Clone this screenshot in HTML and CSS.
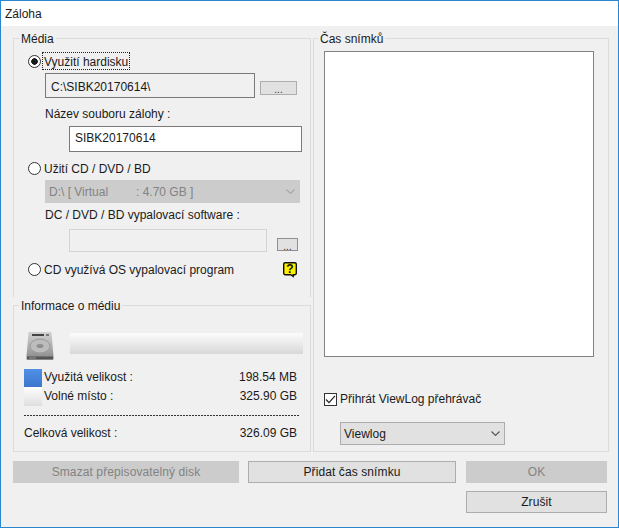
FILE: index.html
```html
<!DOCTYPE html>
<html lang="cs">
<head>
    <meta charset="UTF-8">
    <meta name="viewport" content="width=device-width, initial-scale=1.0">
    <title>Záloha</title>
    <link rel="stylesheet" href="styles.css">
</head>
<body>
<div class="window">
    <div class="title">Záloha</div>

    <div class="main">
        <div class="left-col">
            <fieldset class="group media">
                <legend>Média</legend>

                <label class="option first">
                    <input type="radio" name="target" checked>
                    <span class="focused">Využití hardisku</span>
                </label>
                <div class="path-row">
                    <div class="path-box">C:\SIBK20170614\</div>
                    <button class="dots path-dots" type="button">...</button>
                </div>
                <div class="caption name-caption">Název souboru zálohy :</div>
                <input class="text-input name-input" type="text" value="SIBK20170614">

                <label class="option second">
                    <input type="radio" name="target">
                    <span>Užití CD / DVD / BD</span>
                </label>
                <div class="combo combo-off drive-combo">
                    <span class="drive-text"><span class="drive-name">D:\ [ Virtual</span>: 4.70 GB ]</span>
                    <svg class="chevron" width="9" height="5" viewBox="0 0 9 5"><path d="M.5 .5l4 4 4-4" fill="none" stroke="#a6a6a6" stroke-width="1.100"/></svg>
                </div>
                <div class="caption burn-caption">DC / DVD / BD vypalovací software :</div>
                <div class="burn-row">
                    <input class="text-input burn-input" type="text" disabled>
                    <button class="dots burn-dots" type="button">...</button>
                </div>

                <div class="os-row">
                    <label class="option">
                        <input type="radio" name="target">
                        <span>CD využívá OS vypalovací program</span>
                    </label>
                    <!-- help bubble -->
                    <svg class="help" width="14" height="16" viewBox="0 0 14 16">
                        <path d="M2.200 .7h9.600a1.500 1.500 0 0 1 1.500 1.500v9a1.500 1.500 0 0 1-1.500 1.500h-1.600v1.800l-2.500-1.800H2.200a1.500 1.500 0 0 1-1.500-1.500v-9A1.500 1.500 0 0 1 2.200 .7z" fill="#fff000" stroke="#111" stroke-width="1.400"/>
                        <text x="7" y="11.400" text-anchor="middle" class="help-mark">?</text>
                    </svg>
                </div>
            </fieldset>

            <fieldset class="group info">
                <legend>Informace o médiu</legend>

                <div class="disk-row">
                    <svg width="28" height="30" viewBox="0 0 28 30">
                        <defs>
                            <linearGradient id="diskBody" x1="0" y1="0" x2="0" y2="1">
                                <stop offset="0" stop-color="#d2d2d2"/>
                                <stop offset=".6" stop-color="#ababab"/>
                                <stop offset="1" stop-color="#858585"/>
                            </linearGradient>
                        </defs>
                        <path d="M2.500 1h23l2 24v3.500H.5V25z" fill="url(#diskBody)"/>
                        <path d="M6 3h12v2H6z" fill="#444"/>
                        <path d="M20 3h3v2h-3z" fill="#777"/>
                        <ellipse cx="14" cy="15" rx="10" ry="7" fill="#bcbcbc" stroke="#9a9a9a"/>
                        <ellipse cx="14" cy="15" rx="3.500" ry="2" fill="#8f8f8f"/>
                        <path d="M1 25.500h26v3H1z" fill="#555"/>
                        <path d="M3 26.500h7v1H3z" fill="#999"/>
                    </svg>
                    <div class="usage-bar"></div>
                </div>

                <div class="size-row used-row">
                    <span class="swatch swatch-used"></span>
                    <span class="size-name">Využitá velikost :</span>
                    <span class="size-value">198.54 MB</span>
                </div>
                <div class="size-row free-row">
                    <span class="swatch swatch-free"></span>
                    <span class="size-name">Volné místo :</span>
                    <span class="size-value">325.90 GB</span>
                </div>
                <div class="dash-line"></div>
                <div class="size-row total-row">
                    <span>Celková velikost :</span>
                    <span>326.09 GB</span>
                </div>
            </fieldset>
        </div>

        <fieldset class="group times">
            <legend>Čas snímků</legend>

            <div class="time-list"></div>
            <label class="viewlog-check">
                <span class="check-box">
                    <svg width="11" height="11" viewBox="0 0 11 11"><path d="M1 5.500l3 3.200L10 1.800" fill="none" stroke="#222" stroke-width="1.200"/></svg>
                </span>
                <span>Přihrát ViewLog přehrávač</span>
            </label>
            <div class="combo viewlog-combo">
                <span>Viewlog</span>
                <svg class="chevron" width="9" height="5" viewBox="0 0 9 5"><path d="M.5 .5l4 4 4-4" fill="none" stroke="#555" stroke-width="1.100"/></svg>
            </div>
        </fieldset>
    </div>

    <div class="actions">
        <button class="btn btn-wipe" type="button" disabled>Smazat přepisovatelný disk</button>
        <button class="btn btn-add" type="button">Přidat čas snímku</button>
        <button class="btn btn-ok" type="button" disabled>OK</button>
    </div>
    <div class="actions actions-end">
        <button class="btn btn-ok" type="button">Zrušit</button>
    </div>
</div>
</body>
</html>
```

FILE: styles.css
```css
* {
    box-sizing: border-box;
}

body {
    margin: 0;
    font-family: "Liberation Sans", Arial, sans-serif;
    font-size: 12px;
    line-height: 14px;
    color: #1a1a1a;
    background: #f0f0f0;
}

.window {
    width: 619px;
    height: 528px;
    border: 1px solid #2b86cf;
    background: #f0f0f0;
}

.title {
    height: 25px;
    padding: 6px 0 0 4px;
    background: #fff;
}

/* Group boxes */
.main {
    display: flex;
    padding: 4px 0 0 12px;
}

.left-col {
    width: 298px;
    margin-right: 2px;
}

.group {
    margin: 0;
    padding: 0;
    min-width: 0;
    border: 1px solid #dcdcdc;
}

.group legend {
    padding: 2px 2px 0;
}

.media {
    height: 267px;
    border-bottom: 0;
    padding-left: 15px;
}

.media legend {
    margin-left: -10px;
}

.info {
    height: 155px;
}

.info legend {
    margin-left: 5px;
}

.times {
    width: 296px;
    height: 422px;
    padding-left: 10px;
}

.times legend {
    margin-left: -6px;
}

/* Media rows */
.option {
    display: flex;
    align-items: center;
    height: 16px;
}

.option.first {
    margin-top: 7px;
}

.option.second {
    margin-top: 8px;
}

.option span {
    padding-top: 2px;
}

.option input {
    appearance: none;
    flex: none;
    width: 13px;
    height: 13px;
    margin: 0 3px 0 -1px;
    border: 1px solid #333;
    border-radius: 50%;
    background: #fff;
}

.option input:checked {
    background: radial-gradient(circle, #1a1a1a 0 3px, #fff 3.500px);
}

.option .focused {
    margin-left: -1px;
    padding: 2px 1px 0;
    outline: 1px dotted #222;
    outline-offset: 0;
}

.path-row {
    display: flex;
    margin: 4px 0 0 16px;
}

.path-box {
    width: 210px;
    height: 25px;
    padding: 6px 0 0 5px;
    border: 1px solid #7a7a7a;
}

.dots {
    padding: 3px 0 0;
    font: inherit;
    font-size: 10px;
    line-height: 10px;
    color: #333;
    background: #e1e1e1;
    border: 1px solid #adadad;
    border-radius: 0;
}

.path-dots {
    width: 37px;
    height: 14px;
    margin: 8px 0 0 5px;
}

.caption {
    margin-left: 16px;
}

.name-caption {
    margin-top: 9px;
}

.burn-caption {
    margin-top: 5px;
}

.text-input {
    display: block;
    padding: 0 0 0 5px;
    font: inherit;
    color: inherit;
    background: #fff;
    border: 1px solid #7a7a7a;
    border-radius: 0;
    outline: 0;
}

.name-input {
    width: 233px;
    height: 26px;
    margin: 5px 0 0 40px;
    padding-bottom: 2px;
}

.combo {
    display: flex;
    align-items: center;
    justify-content: space-between;
}

.combo-off {
    color: #838383;
    background: #ccc;
}

.drive-combo {
    width: 255px;
    height: 23px;
    margin: 4px 0 0 16px;
    padding: 0 5px 0 4px;
}

.drive-name {
    display: inline-block;
    width: 87px;
}

.burn-row {
    display: flex;
    margin: 7px 0 0 40px;
}

.burn-input {
    width: 198px;
    height: 23px;
    background: #f0f0f0;
    border-color: #d4d4d4;
}

.burn-dots {
    width: 21px;
    height: 13px;
    margin: 9px 0 0 10px;
    border-color: #8f8f8f;
}

.os-row {
    display: flex;
    justify-content: space-between;
    width: 268px;
    margin-top: 9px;
}

.help {
    margin-top: 1px;
}

.help-mark {
    font-size: 12px;
    font-weight: bold;
    fill: #111;
}

/* Media info */
.disk-row {
    display: flex;
    margin: 18px 0 0 12px;
}

.usage-bar {
    width: 233px;
    height: 21px;
    margin: 2px 0 0 16px;
    background: linear-gradient(#fcfcfc, #d8d8d8);
}

.size-row {
    display: flex;
    align-items: center;
    width: 273px;
    margin-left: 10px;
}

.used-row {
    height: 18px;
    margin-top: 8px;
}

.free-row {
    height: 19px;
}

.total-row {
    justify-content: space-between;
    margin-top: 10px;
}

.swatch {
    flex: none;
    width: 18px;
    height: 100%;
    margin-right: 2px;
}

.swatch-used {
    background: linear-gradient(#4f8fe6, #3c78cc);
}

.swatch-free {
    background: linear-gradient(#fff, #dedede);
}

.size-name {
    flex: 1;
    padding-bottom: 2px;
}

.size-value {
    padding-bottom: 2px;
}

.dash-line {
    width: 275px;
    height: 1px;
    margin: 9px 0 0 10px;
    background: repeating-linear-gradient(90deg, #333 0 2px, transparent 2px 3px);
}

/* Snapshot times */
.time-list {
    width: 270px;
    height: 306px;
    margin-top: 5px;
    background: #fff;
    border: 1px solid #828282;
}

.viewlog-check {
    display: flex;
    align-items: center;
    height: 16px;
    margin-top: 34px;
}

.check-box {
    flex: none;
    display: flex;
    width: 13px;
    height: 13px;
    margin-right: 3px;
    background: #fff;
    border: 1px solid #333;
}

.viewlog-combo {
    width: 165px;
    height: 23px;
    margin: 15px 0 0 16px;
    padding: 0 4px 0 3px;
    background: #e1e1e1;
    border: 1px solid #adadad;
}

/* Bottom buttons */
.actions {
    display: flex;
    padding: 9px 0 0 12px;
}

.actions-end {
    padding: 8px 0 0 465px;
}

.btn {
    height: 22px;
    padding: 0;
    font: inherit;
    letter-spacing: .1px;
    color: inherit;
    background: #e1e1e1;
    border: 1px solid #adadad;
    border-radius: 0;
}

.btn:disabled {
    color: #838383;
    background: #ccc;
    border-color: #ccc;
}

.btn-wipe {
    width: 226px;
}

.btn-add {
    width: 208px;
    margin-left: 9px;
}

.btn-ok {
    width: 141px;
}

.btn-add + .btn-ok {
    margin-left: 10px;
}
```
